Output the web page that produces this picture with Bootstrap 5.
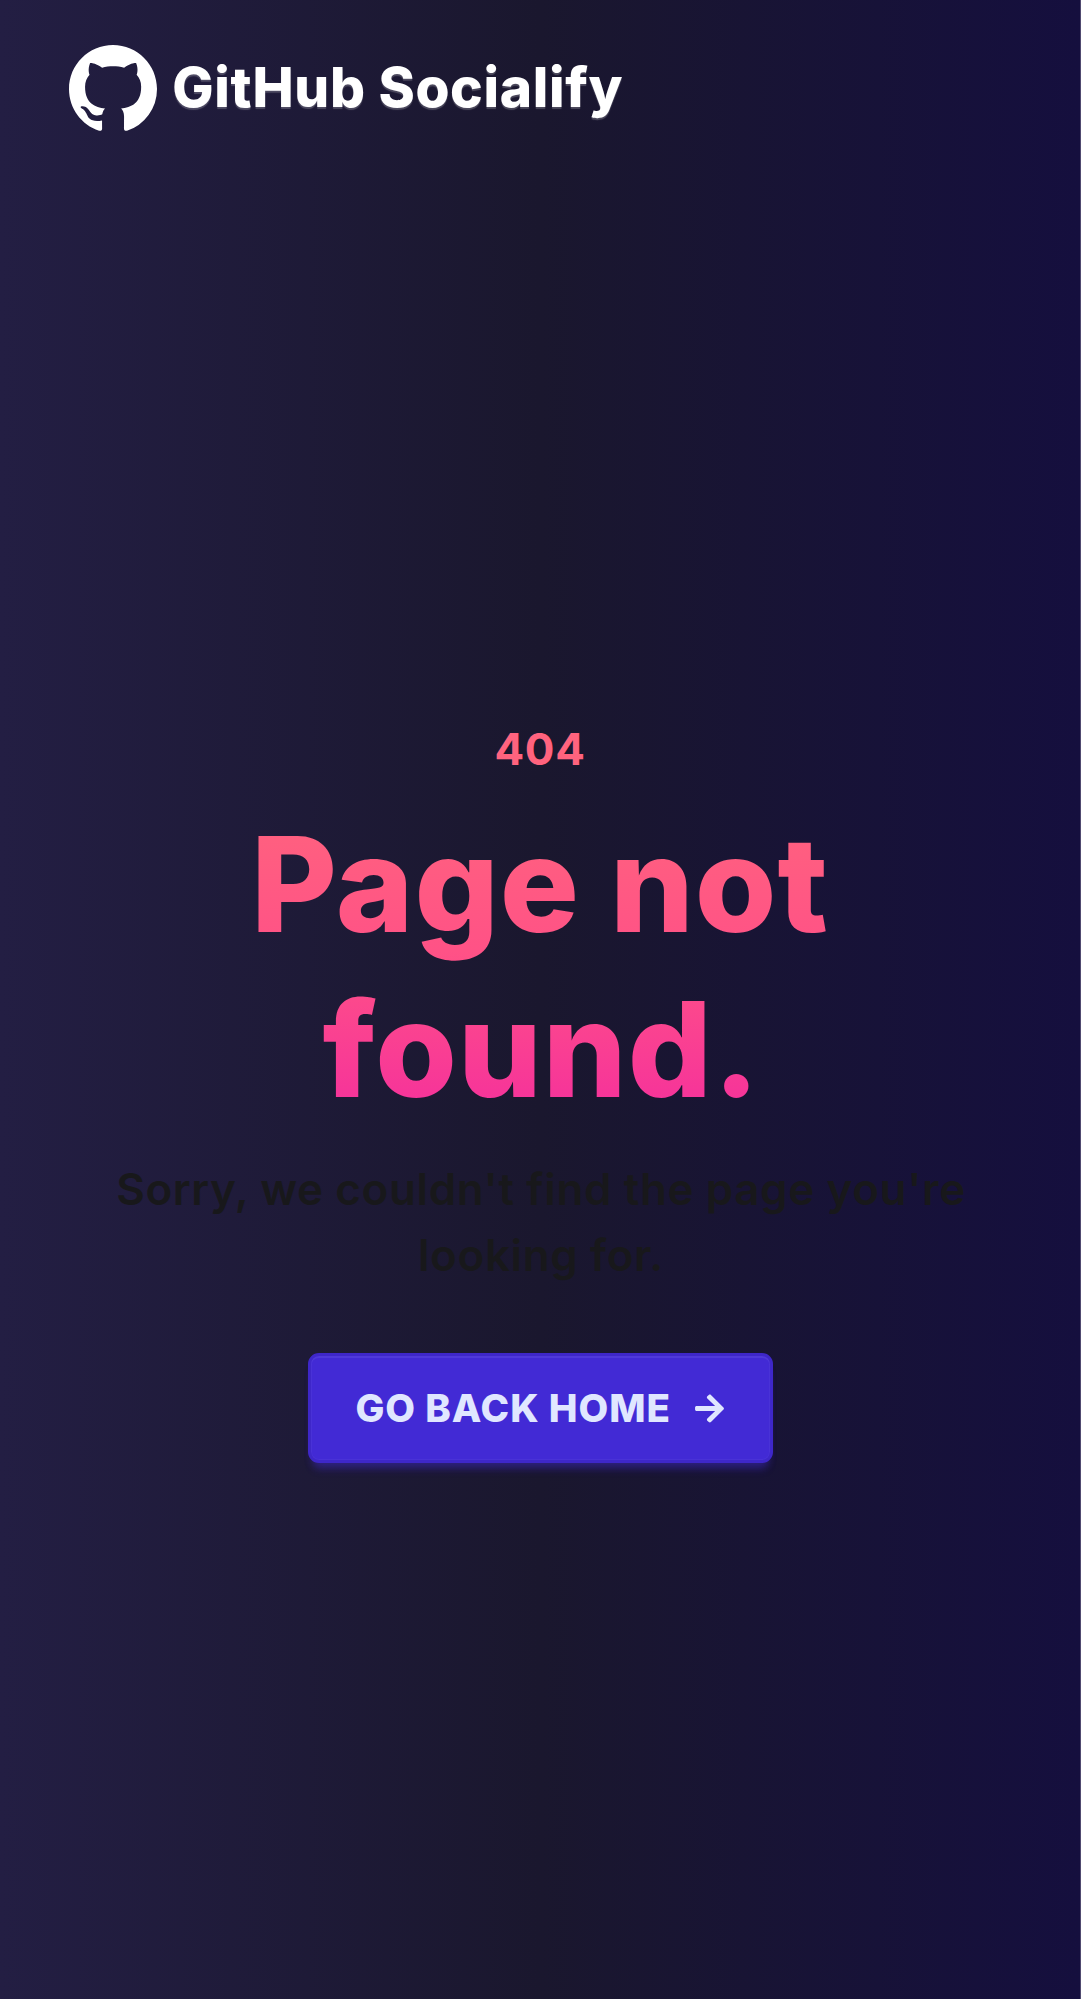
<!DOCTYPE html>
<html lang="en">
<head>
<meta charset="utf-8">
<meta name="viewport" content="width=device-width, initial-scale=1">
<title>GitHub Socialify</title>
<link href="https://cdn.jsdelivr.net/npm/bootstrap@5.3.0/dist/css/bootstrap.min.css" rel="stylesheet">
<style>
body{font-family:Inter,"Liberation Sans",sans-serif;background:#504a70;height:1999px;overflow:hidden}
.page-shell{width:1080px;height:1999px;background:linear-gradient(to right,#231e43,#1a172e 50%,#150f3e)}
.site-head{height:177px;padding:0 68.75px}
.brand-link{gap:15.5px;color:#fff;font-size:55px;font-weight:800;line-height:77px;letter-spacing:.68px;text-shadow:0 2px 1px rgba(255,255,255,.22)}
.brand-link span{padding-bottom:3px}
.brand-link svg{width:88px;height:88px}
.not-found{padding:539px 88px 0}
.status-code{font-size:44px;font-weight:750;line-height:66px;letter-spacing:.6px;color:#ff637e;margin:0 0 19.5px}
.headline{font-size:132px;font-weight:800;line-height:165px;letter-spacing:1px;background:linear-gradient(#ff637e,#ff5286 45%,#f6339a 92%);-webkit-background-clip:text;background-clip:text;color:transparent;margin:0 0 24.5px}
.headline span{margin-left:3px}
.explain{font-size:44px;font-weight:600;line-height:66px;letter-spacing:.6px;color:#18181b;margin:0 0 65px;padding-left:2px}
.btn-home{--bs-btn-color:#e0e7ff;--bs-btn-bg:#422ad5;--bs-btn-border-color:#3e27c9;--bs-btn-border-width:3px;--bs-btn-border-radius:11px;--bs-btn-padding-x:44px;--bs-btn-padding-y:0;width:465px;height:110px;font-size:38.5px;font-weight:780;letter-spacing:.9px;white-space:nowrap;box-shadow:inset 0 2px 0 #4f39d9,inset 0 0 0 1px #4932d7,0 8px 8px -5px #422ad54d,0 11px 8px -5px #422ad54d}
.btn-home span{padding:1px 0 0 1px}
.btn-home svg{width:33px;height:33px}
</style>
</head>
<body>
<div class="page-shell d-flex flex-column">
<header class="site-head d-flex align-items-center">
<a class="brand-link d-flex align-items-center text-decoration-none" href="#">
<svg viewBox="0 0 16 16" fill="currentColor" aria-hidden="true"><path d="M8 0C3.58 0 0 3.58 0 8c0 3.54 2.29 6.53 5.47 7.59.4.07.55-.17.55-.38 0-.19-.01-.82-.01-1.49-2.01.37-2.53-.49-2.69-.94-.09-.23-.48-.94-.82-1.13-.28-.15-.68-.52-.01-.53.63-.01 1.08.58 1.23.82.72 1.21 1.87.87 2.33.66.07-.52.28-.87.51-1.07-1.78-.2-3.64-.89-3.64-3.95 0-.87.31-1.59.82-2.15-.08-.2-.36-1.02.08-2.12 0 0 .67-.21 2.2.82.64-.18 1.32-.27 2-.27s1.36.09 2 .27c1.53-1.04 2.2-.82 2.2-.82.44 1.1.16 1.92.08 2.12.51.56.82 1.27.82 2.15 0 3.07-1.87 3.75-3.65 3.95.29.25.54.73.54 1.48 0 1.07-.01 1.93-.01 2.2 0 .21.15.46.55.38A8.01 8.01 0 0 0 16 8c0-4.42-3.58-8-8-8z"/></svg>
<span>GitHub Socialify</span></a>
</header>
<main class="not-found flex-grow-1 d-flex flex-column align-items-center text-center">
<p class="status-code">404</p>
<h1 class="headline">Page not<br><span>found.</span></h1>
<p class="explain">Sorry, we couldn't find the page you're looking for.</p>
<a class="btn btn-home d-flex align-items-center justify-content-between" href="#"><span>GO BACK HOME</span>
<svg viewBox="0 0 448 512" fill="currentColor" aria-hidden="true"><path d="M190.5 66.9l22.2-22.2c9.4-9.4 24.6-9.4 33.9 0L441 239c9.4 9.4 9.4 24.6 0 33.9L246.6 467.300c-9.4 9.4-24.6 9.4-33.9 0l-22.2-22.2c-9.5-9.5-9.3-25 .4-34.300L311.4 296H24c-13.3 0-24-10.700-24-24v-32c0-13.300 10.700-24 24-24h287.400L190.900 101.200c-9.800-9.300-10-24.800-.4-34.300z"/></svg></a>
</main>
</div>
<script src="https://cdn.jsdelivr.net/npm/bootstrap@5.3.0/dist/js/bootstrap.bundle.min.js"></script>
</body>
</html>
